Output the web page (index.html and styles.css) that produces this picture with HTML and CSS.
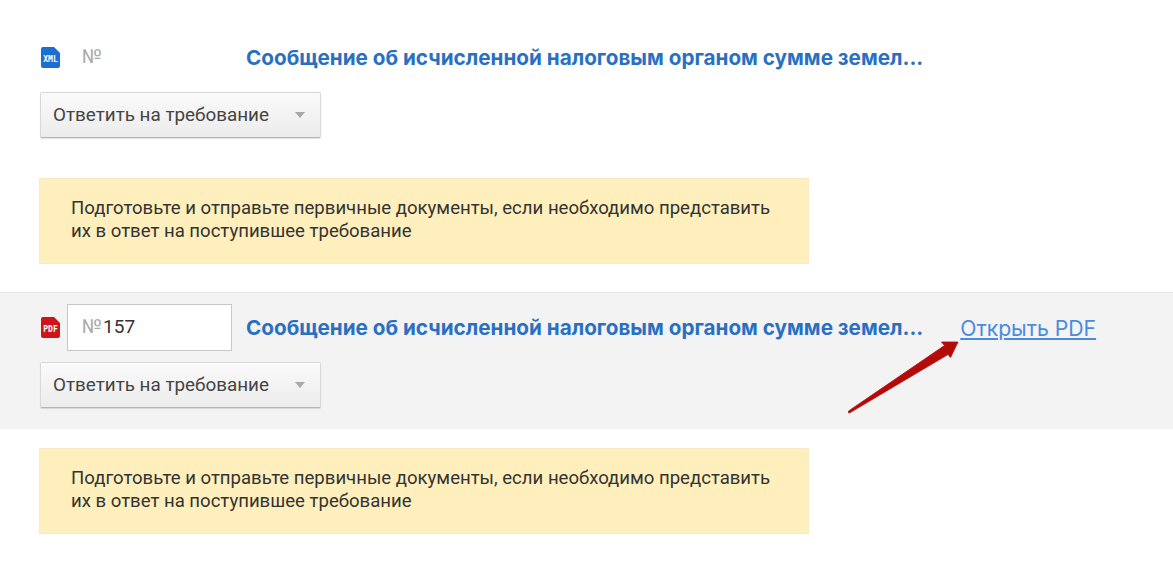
FILE: index.html
```html
<!DOCTYPE html>
<html lang="en">
<head>
  <meta charset="UTF-8">
  <title>Документы</title>
  <link rel="stylesheet" href="styles.css">
</head>
<body>
  <div class="doc doc-first">
    <div class="doc-head">
      <svg class="file-icon" viewBox="0 0 19 21"><path fill="#1a6fd0" d="M2 0h11l6 6v13a2 2 0 0 1-2 2H2a2 2 0 0 1-2-2V2a2 2 0 0 1 2-2z"/><text x="9.5" y="15" class="file-label">XML</text></svg>
      <div class="number number-plain"><span class="number-sign">№</span></div>
      <a class="doc-title">Сообщение об исчисленной налоговым органом сумме земел...</a>
    </div>
    <button class="reply">Ответить на требование<span class="caret"></span></button>
  </div>
  <div class="notice notice-first">Подготовьте и отправьте первичные документы, если необходимо представить<br>их в ответ на поступившее требование</div>

  <div class="doc doc-active">
    <div class="doc-head">
      <svg class="file-icon" viewBox="0 0 19 21"><path fill="#d0121b" d="M2 0h11l6 6v13a2 2 0 0 1-2 2H2a2 2 0 0 1-2-2V2a2 2 0 0 1 2-2z"/><text x="9.5" y="15" class="file-label">PDF</text></svg>
      <div class="number"><span class="number-sign">№</span>157</div>
      <a class="doc-title">Сообщение об исчисленной налоговым органом сумме земел...</a>
      <a class="open-pdf">Открыть PDF</a>
    </div>
    <button class="reply">Ответить на требование<span class="caret"></span></button>
  </div>
  <div class="notice notice-last">Подготовьте и отправьте первичные документы, если необходимо представить<br>их в ответ на поступившее требование</div>

  <!-- стрелка поверх скриншота -->
  <svg class="arrow" viewBox="0 0 120 80"><path fill="#b30a0a" stroke="#b30a0a" stroke-width="0.8" stroke-linejoin="round" d="M0.6 71 Q-0.4 72.6 1.4 73 L100 14.5 L102.5 17.5 L110 2 L93.5 2 L96.5 5.5 Z"/></svg>
</body>
</html>
```

FILE: styles.css
```css
body {
  margin: 0;
  font-family: Roboto, "Liberation Sans", sans-serif;
  background-color: #fff;
  color: #333;
  height: 583px;
  overflow: hidden;
  position: relative;
}

/* Строка документа */
.doc {
  padding: 12px 40px 21px;
}

.doc-first {
  padding-top: 34px;
  padding-bottom: 0;
}

.doc-active {
  background-color: #f3f3f3;
  border-top: 1px solid #e6e6e6;
  padding-top: 11px;
}

.doc-head {
  display: flex;
  align-items: center;
  height: 47px;
  margin-bottom: 11px;
}

.file-icon {
  width: 19px;
  height: 21px;
  margin-left: 1px;
  flex: none;
}

.file-label {
  font-family: "DejaVu Sans Mono", monospace;
  font-size: 8px;
  font-weight: bold;
  fill: #fff;
  text-anchor: middle;
}

.number {
  box-sizing: border-box;
  width: 165px;
  height: 47px;
  margin-left: 7px;
  padding-left: 14px;
  border: 1px solid #c8c8c8;
  background-color: #fff;
  font-size: 19px;
  line-height: 43px;
  color: #333;
}

.number-plain {
  border-color: transparent;
  background: none;
}

.number-sign {
  margin-right: 1px;
  font-size: 19.5px;
  color: #aaa;
}

.doc-title {
  margin-left: 14px;
  font-family: Inter, Roboto, sans-serif;
  font-size: 20.7px;
  font-weight: 700;
  color: #2a70c2;
  white-space: nowrap;
}

.open-pdf {
  margin-left: 37px;
  font-family: Inter, Roboto, sans-serif;
  font-size: 21.2px;
  color: #4a8be0;
  text-decoration: underline;
}

/* Кнопка с выпадающим списком */
.reply {
  display: flex;
  align-items: center;
  justify-content: space-between;
  box-sizing: border-box;
  width: 281px;
  height: 46px;
  padding: 0 15px 1px 12px;
  border: 1px solid #d8d8d8;
  border-bottom-color: #b5b5b5;
  border-radius: 2px;
  background: linear-gradient(#fafafa, #ececec);
  box-shadow: 0 1px 1px rgba(0, 0, 0, 0.12);
  font-family: inherit;
  font-size: 18.85px;
  color: #444;
}

.caret {
  width: 0;
  height: 0;
  border-left: 5.5px solid transparent;
  border-right: 5.5px solid transparent;
  border-top: 6px solid #a8a8a8;
}

/* Жёлтое уведомление */
.notice {
  box-sizing: border-box;
  width: 770px;
  height: 86px;
  margin-left: 39px;
  padding: 18px 31px;
  background-color: #feefbc;
  border: 1px solid #f7ecc6;
  font-size: 18.57px;
  line-height: 23px;
  color: #333;
}

.notice-first {
  margin-top: 40px;
  margin-bottom: 28px;
}

.notice-last {
  margin-top: 19px;
}

.arrow {
  position: absolute;
  left: 848px;
  top: 340px;
  width: 120px;
  height: 80px;
}
```
